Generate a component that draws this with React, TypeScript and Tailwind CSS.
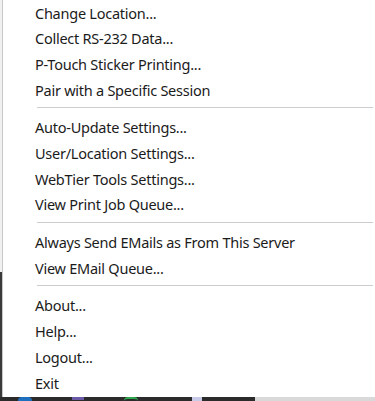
import React from "react"

type Entry = string | null

const entries: Entry[] = [
  "Change Location...",
  "Collect RS-232 Data...",
  "P-Touch Sticker Printing...",
  "Pair with a Specific Session",
  null,
  "Auto-Update Settings...",
  "User/Location Settings...",
  "WebTier Tools Settings...",
  "View Print Job Queue...",
  null,
  "Always Send EMails as From This Server",
  "View EMail Queue...",
  null,
  "About...",
  "Help...",
  "Logout...",
  "Exit",
]

export default function App() {
  return (
    <div className="relative w-[375px] h-[401px] overflow-hidden bg-[#f0f0f0]">
      {/* desktop strip behind the menu */}
      <div className="absolute left-0 top-[272px] w-[3px] h-[129px] bg-[#3a3a3a]" />
      <div className="absolute left-0 bottom-0 w-[375px] h-[4px] flex">
        <div className="w-[255px] bg-[#2b2b2b] flex items-start gap-[40px] pl-[18px]">
          <span className="w-[14px] h-[4px] rounded-t-full bg-[#1f6fbf]" />
          <span className="w-[12px] h-[3px] bg-[#6b5aa8]" />
          <span className="w-[14px] h-[4px] rounded-t-full border-t-2 border-[#2fa84f]" />
          <span className="w-[10px] h-[4px] bg-[#c9c9e8] ml-[14px]" />
        </div>
        <div className="flex-1 bg-[#d9d9d9]" />
      </div>

      <div
        className="absolute left-[2px] top-0 w-[373px] h-[397px] bg-white border-l border-[#c8c8c8] text-[14.5px] tracking-[-0.25px] text-[#1b1b1b]"
        style={{ fontFamily: '"Noto Sans", "Open Sans", sans-serif' }}
      >
        <div className="flex flex-col">
          {entries.map((e, i) =>
            e === null ? (
              <div key={i} className="h-[12px] pt-[4px] pl-[34px] pr-[2px]">
                <div className="h-px bg-[#cdcdcd]" />
              </div>
            ) : (
              <div key={i} className="h-[25.7px] flex items-center pl-[32px] leading-none whitespace-nowrap">
                {e}
              </div>
            )
          )}
        </div>
      </div>
    </div>
  )
}
